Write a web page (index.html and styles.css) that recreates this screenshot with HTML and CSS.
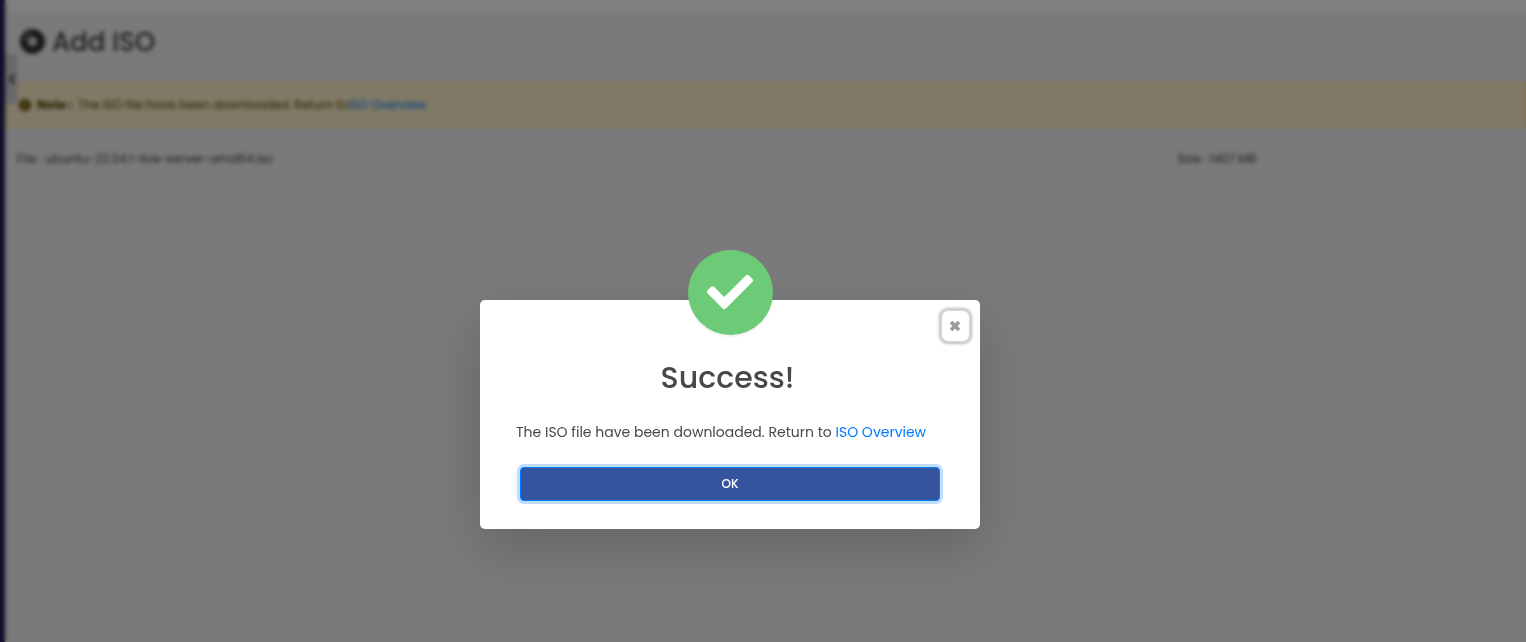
FILE: index.html
```html
<!DOCTYPE html>
<html lang="en">
<head>
<meta charset="utf-8">
<meta name="viewport" content="width=device-width, initial-scale=1">
<title>Add ISO</title>
<link rel="stylesheet" href="styles.css">
</head>
<body>
<div class="page" inert>
  <aside class="sidebar"></aside>
  <div class="content">
    <header class="topbar"></header>
    <button class="collapse" type="button" aria-label="Collapse sidebar">
      <svg viewBox="0 0 8 12" width="8" height="12"><path d="M6.500 1.500 2 6l4.500 4.500" fill="none" stroke="currentColor" stroke-width="1.800"/></svg>
    </button>
    <main>
      <h1 class="title">
        <svg viewBox="0 0 26 26" width="25" height="25"><circle cx="13" cy="13" r="13" fill="#303030"/><path d="M4.500 12a8.500 8.500 0 0 1 7.500-7.500" fill="none" stroke="#aaa" stroke-width="1.500"/><circle cx="13" cy="13" r="5" fill="#d8d8d8"/></svg>
        <span>Add ISO</span>
      </h1>
      <p class="note">
        <svg viewBox="0 0 12 12" width="12" height="12"><circle cx="6" cy="6" r="6" fill="#705000"/><path d="M6 5v4M6 2.500v1.500" stroke="#fff3cd" stroke-width="1.500"/></svg>
        <strong>Note :</strong>
        <span>The ISO file have been downloaded. Return to<a href="#overview">ISO Overview</a></span>
      </p>
      <div class="details">
        <span>File : ubuntu-22.04.1-live-server-amd64.iso</span>
        <span>Size : 1407 MB</span>
      </div>
    </main>
  </div>
</div>
<div class="backdrop">
  <section class="dialog" role="dialog" aria-modal="true" aria-labelledby="dialog-title">
    <div class="badge">
      <svg viewBox="0 0 512 512" width="46" height="46"><path fill="#fff" d="M173.898 439.404l-166.400-166.400c-9.997-9.997-9.997-26.206 0-36.204l36.203-36.204c9.997-9.998 26.207-9.998 36.204 0L192 312.690 432.095 72.596c9.997-9.997 26.207-9.997 36.204 0l36.203 36.204c9.997 9.997 9.997 26.206 0 36.204l-294.400 294.401c-9.998 9.997-26.207 9.997-36.204-.001z"/></svg>
    </div>
    <button class="close" type="button" aria-label="Close">
      <svg viewBox="0 0 12 12" width="12" height="12"><path d="M2 2l8 8M10 2l-8 8" stroke="currentColor" stroke-width="3.600"/></svg>
    </button>
    <h2 id="dialog-title">Success!</h2>
    <p class="message">The ISO file have been downloaded. Return to <a href="#overview">ISO Overview</a></p>
    <button class="ok" type="button">OK</button>
  </section>
</div>
</body>
</html>
```
FILE: styles.css
```css
* { box-sizing: border-box; }
body {
  margin: 0;
  background: #f4f4f8;
  color: #484848;
  font-family: Poppins, Inter, "Open Sans", sans-serif;
  font-size: 12px;
}
a { color: #007bff; text-decoration: none; }
svg { display: block; flex: none; }
.page { display: flex; min-height: 100vh; }
.sidebar { width: 5px; background: #1c1c55; }
.content { flex: 1; position: relative; }
.topbar { height: 12px; background: #fff; }
.collapse {
  position: absolute;
  left: 0;
  top: 54px;
  width: 12px;
  height: 50px;
  padding: 0 0 0 3px;
  border: 0;
  background: #d2d2d4;
  color: #222;
}
.title {
  display: flex;
  align-items: flex-start;
  gap: 7px;
  margin: 0;
  padding: 12px 15px 0;
  height: 69px;
  font-size: 26px;
  line-height: 36px;
  font-weight: 500;
}
.title svg { margin-top: 5px; }
.note {
  display: flex;
  align-items: center;
  gap: 6px;
  margin: 0;
  padding: 14px 13px 13px;
  border: 1px solid #ffe8a0;
  background: #fff3cd;
  color: #604800;
  line-height: 18px;
}
.details {
  display: grid;
  grid-template-columns: 10fr 3fr;
  padding: 21px 0 0 12px;
  line-height: 20px;
}
.backdrop {
  position: fixed;
  inset: 0;
  display: flex;
  justify-content: center;
  align-items: flex-start;
  padding: 300px 66px 0 0;
  background: rgba(0, 0, 0, .5);
  backdrop-filter: blur(2px);
}
.dialog {
  position: relative;
  width: 500px;
  padding: 57px 40px 28px;
  border-radius: 5px;
  background: #fff;
  box-shadow: 0 20px 60px rgba(0, 0, 0, .18);
}
.badge {
  position: absolute;
  left: 208px;
  top: -50px;
  display: grid;
  place-items: center;
  width: 85px;
  height: 85px;
  padding: 0 1px 1px 0;
  border-radius: 50%;
  background: #6dcb78;
  box-shadow: 0 2px 2px rgba(0, 0, 0, .06);
}
.close {
  position: absolute;
  right: 8px;
  top: 8px;
  display: grid;
  place-items: center;
  width: 33px;
  height: 36px;
  padding: 0 1px 1px 0;
  border: 3px solid #d2d2d2;
  border-radius: 9px;
  background: #fff;
  color: #999;
  box-shadow: 0 0 3px rgba(0, 0, 0, .25);
}
.dialog h2 {
  margin: 0 5px 23px 0;
  font-size: 30px;
  line-height: 42px;
  font-weight: 500;
  text-align: center;
}
.message {
  margin: 0 -20px 24px -4px;
  font-size: 14px;
  line-height: 21px;
}
.ok {
  display: block;
  width: 100%;
  height: 34px;
  border: 1px solid #007bff;
  border-radius: 4px;
  background: #34549d;
  color: #fff;
  font: 500 12px Poppins, Inter, sans-serif;
  box-shadow: 0 0 0 3px #bfdeff;
}
```
